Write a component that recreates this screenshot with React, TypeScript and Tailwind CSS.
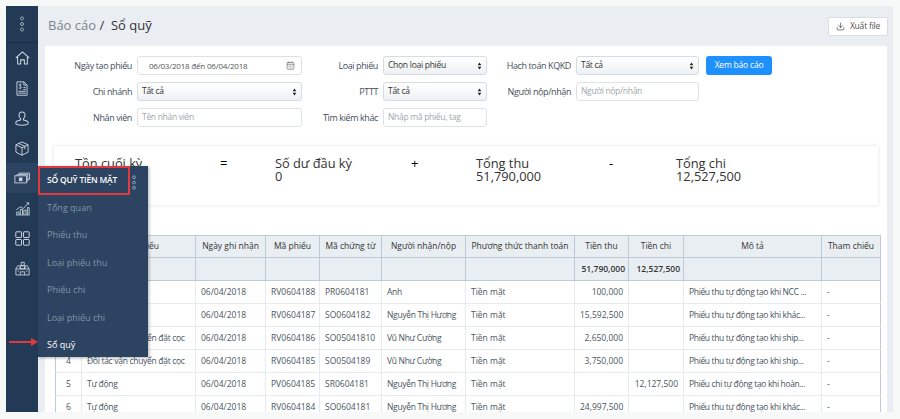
import React from "react";
import { CalendarDays, Download } from "lucide-react";

const font = { fontFamily: '"Open Sans","Noto Sans",sans-serif' };

function Dots({ cls }: { cls: string }) {
  return (
    <svg viewBox="0 0 6 16" className={cls} fill="none" stroke="currentColor" strokeWidth="0.9">
      <circle cx="3" cy="2.4" r="1.5" />
      <circle cx="3" cy="8" r="1.5" />
      <circle cx="3" cy="13.6" r="1.5" />
    </svg>
  );
}

function Sel({ text }: { text: string }) {
  return (
    <div className="h-[19px] flex items-center justify-between pl-[4px] pr-[4px] rounded-[3px] border border-[#d5dce2] bg-gradient-to-b from-white to-[#eef1f4] text-[#333] text-[8.5px] tracking-[-0.27px]">
      <span>{text}</span>
      <svg viewBox="0 0 6 10" className="w-[5px] h-[8px]" fill="#222">
        <path d="M3 0.5 5.300 4H.7zM3 9.500.7 6h4.600z" />
      </svg>
    </div>
  );
}

function Inp({ text }: { text: string }) {
  return (
    <div className="h-[19px] flex items-center px-[4px] rounded-[3px] border border-[#dde2e7] bg-white text-[#a0a7ae] text-[8.5px] tracking-[-0.3px]">
      {text}
    </div>
  );
}

function Lab({ text }: { text: string }) {
  return <div className="h-[19px] flex items-center justify-end pr-[5px] text-[#44505c] whitespace-nowrap text-[9px] tracking-[-0.4px]">{text}</div>;
}

const rows = [
  ["1", "Tự động", "06/04/2018", "RV0604188", "PR0604181", "Anh", "Tiền mặt", "100,000", "", "Phiếu thu tự động tạo khi NCC ...", "-"],
  ["2", "Tự động", "06/04/2018", "RV0604187", "SO0604182", "Nguyễn Thị Hương", "Tiền mặt", "15,592,500", "", "Phiếu thu tự động tạo khi khác...", "-"],
  ["3", "Đối tác vận chuyển đặt cọc", "06/04/2018", "RV0604186", "SO05041810", "Vũ Như Cường", "Tiền mặt", "2,650,000", "", "Phiếu thu tự động tạo khi ship...", "-"],
  ["4", "Đối tác vận chuyển đặt cọc", "06/04/2018", "RV0604185", "SO0504189", "Vũ Như Cường", "Tiền mặt", "3,750,000", "", "Phiếu thu tự động tạo khi ship...", "-"],
  ["5", "Tự động", "06/04/2018", "PV0604185", "SR0604181", "Nguyễn Thị Hương", "Tiền mặt", "", "12,127,500", "Phiếu chi tự động tạo khi hoàn...", "-"],
  ["6", "Tự động", "06/04/2018", "RV0604184", "SO0604181", "Nguyễn Thị Hương", "Tiền mặt", "24,997,500", "", "Phiếu thu tự động tạo khi khác...", "-"],
];
const heads = ["STT", "Loại phiếu", "Ngày ghi nhận", "Mã phiếu", "Mã chứng từ", "Người nhận/nộp", "Phương thức thanh toán", "Tiền thu", "Tiền chi", "Mô tả", "Tham chiếu"];
const widths = [26, 114, 70, 54, 62, 84, 109, 54, 55, 138, 59];

function Summary({ title, value }: { title: string; value?: string }) {
  return (
    <div className="text-[12.8px] leading-[13px] text-[#333] whitespace-nowrap">
      <div>{title}</div>
      <div>{value}</div>
    </div>
  );
}

function NavIcon({ active, children }: { active?: boolean; children: React.ReactNode }) {
  return <div className={`h-[30px] w-full flex items-center justify-center ${active ? "bg-[#2c4462]" : ""}`}>{children}</div>;
}

const menu = ["Tổng quan", "Phiếu thu", "Loại phiếu thu", "Phiếu chi", "Loại phiếu chi"];

export default function App() {
  return (
    <div className="w-[900px] h-[419px] bg-[#f7f9f9] pt-[6px] pl-[6px] pr-[7px] pb-[7px] overflow-hidden" style={font}>
      <div className="relative flex w-full h-[406px] bg-[#eaeef3] overflow-hidden">
        {/* sidebar */}
        <div className="w-[32px] shrink-0 bg-[#233a57] text-[#ccd5de] flex flex-col">
          <div className="h-[37px] border-b border-[#1b2e46] flex items-center justify-center text-[#aab6c2]">
            <Dots cls="w-[6px] h-[16px]" />
          </div>
          <div className="flex flex-col items-center">
            <NavIcon>
              <svg viewBox="0 0 16 15" className="w-[15px] h-[14px]" fill="none" stroke="currentColor" strokeWidth="1.1" strokeLinejoin="round">
                <path d="M.8 7.500 8 1l7.200 6.500M2.800 6.500V14H6V9.500h4V14h3.200V6.500" />
              </svg>
            </NavIcon>
            <NavIcon>
              <svg viewBox="0 0 13 16" className="w-[12px] h-[15px]" fill="none" stroke="currentColor" strokeWidth="1">
                <path d="M1 .8h7.500l3.500 3.500v11H1zM8.500.8v3.500H12" />
                <path d="M2.500 11h8M2.500 13h8M8 7h2.500M8 9h2.500" />
                <path d="M6 3.500c-1.500-.8-3 .2-2 1.500 1 .8 2.400 1 2 2.200-.5 1-2 .8-2.800.2M4.600 2.500v6.200" strokeWidth=".8" />
              </svg>
            </NavIcon>
            <NavIcon>
              <svg viewBox="0 0 15 16" className="w-[14px] h-[15px]" fill="none" stroke="currentColor" strokeWidth="1.1">
                <path d="M7.500 1c-2 0-3.200 1.600-3.200 3.500 0 1.500.8 3 1.700 3.800v1.200C3 10 .8 11 .8 12.800c0 1.400 1.600 2.400 6.700 2.400s6.700-1 6.700-2.400c0-1.800-2.200-2.800-5.200-3.300V8.300c.9-.8 1.700-2.300 1.700-3.800C10.700 2.600 9.500 1 7.500 1z" />
              </svg>
            </NavIcon>
            <NavIcon>
              <svg viewBox="0 0 15 16" className="w-[14px] h-[15px]" fill="none" stroke="currentColor" strokeWidth="1" strokeLinejoin="round">
                <path d="M7.500 1 14 4v8l-6.500 3.200L1 12V4zM1 4l6.500 3.200L14 4M7.500 7.200v8M4 2.500l6.500 3.200v3" />
              </svg>
            </NavIcon>
            <NavIcon active>
              <svg viewBox="0 0 18 13" className="w-[16px] h-[12px]" fill="none" stroke="currentColor" strokeWidth="1">
                <rect x="1" y="4" width="13" height="8" />
                <rect x="5.500" y="6" width="4" height="4" fill="currentColor" stroke="none" />
                <path d="M3.500 4V2.500H15.500V10H14M6 2.500V1H17.500V8H15.500" />
              </svg>
            </NavIcon>
            <NavIcon>
              <svg viewBox="0 0 17 16" className="w-[15px] h-[15px]" fill="none" stroke="currentColor" strokeWidth="1">
                <path d="M1 15.300h15.500M2 15v-3h2.500v3M6 15V9h2.500v6M10 15v-5h2.500v5M14 15V7h2v8" />
                <path d="M1.500 9.500 6 6l3.500 2 5.500-6" />
                <path d="M13 1.500h2.500V4" />
              </svg>
            </NavIcon>
            <NavIcon>
              <svg viewBox="0 0 15 15" className="w-[15px] h-[15px]" fill="none" stroke="currentColor" strokeWidth="1">
                <rect x=".8" y=".8" width="5.700" height="5.700" rx=".6" />
                <rect x="8.500" y=".8" width="5.700" height="5.700" rx=".6" />
                <rect x=".8" y="8.500" width="5.700" height="5.700" rx=".6" />
                <rect x="8.500" y="8.500" width="5.700" height="5.700" rx=".6" />
              </svg>
            </NavIcon>
            <NavIcon>
              <svg viewBox="0 0 17 16" className="w-[15px] h-[15px]" fill="none" stroke="currentColor" strokeWidth="1">
                <path d="M1 15.300h15V8.500H1zM1 8.500 3 5h3v3.500M6 5V8.500M11 8.500V5h3l2 3.500M6 15.300v-3.500h5v3.500M3 11h1.500M12.500 11H14" />
                <path d="M7 1h3.500v3.500H7zM6 8.500h5V5H6" />
              </svg>
            </NavIcon>
          </div>
        </div>

        {/* content */}
        <div className="flex-1 min-w-0 flex flex-col pl-[7px] pr-[6px]">
          <div className="h-[40px] shrink-0 flex items-center justify-between">
            <div className="text-[13px] pl-[3px] text-[#333]">
              <span className="text-[#7b858e]">Báo cáo</span> /&nbsp; Sổ quỹ
            </div>
            <div className="w-[60px] h-[19px] -mr-px flex items-center justify-center gap-[5px] rounded-[2px] border border-[#d8dde2] bg-white text-[#555] text-[8.5px] tracking-[-0.2px]">
              <Download size={9} strokeWidth={2} />
              Xuất file
            </div>
          </div>

          <div className="flex-1 bg-white pt-[10px] pl-[9px] pr-[7px]">
            <div className="-ml-[9px] grid grid-cols-[92px_165px_81px_104px_89px_123px_73px] gap-y-[7px]">
              <Lab text="Ngày tạo phiếu" />
              <div className="h-[19px] flex items-center justify-between pl-[11px] pr-[6px] rounded-[3px] border border-[#dde2e7] text-[#555] text-[8px] tracking-[-0.2px]">
                <span>06/03/2018 đến 06/04/2018</span>
                <CalendarDays size={9} strokeWidth={1.5} />
              </div>
              <Lab text="Loại phiếu" />
              <Sel text="Chọn loại phiếu" />
              <Lab text="Hạch toán KQKD" />
              <Sel text="Tất cả" />
              <div className="ml-[7px] w-[66px] h-[19px] flex items-center justify-center rounded-[3px] bg-[#1e90ff] text-white text-[8.5px] tracking-[-0.2px]">Xem báo cáo</div>

              <Lab text="Chi nhánh" />
              <Sel text="Tất cả" />
              <Lab text="PTTT" />
              <Sel text="Tất cả" />
              <Lab text="Người nộp/nhận" />
              <Inp text="Người nộp/nhận" />
              <div />

              <Lab text="Nhân viên" />
              <Inp text="Tên nhân viên" />
              <Lab text="Tìm kiếm khác" />
              <Inp text="Nhập mã phiếu, tag" />
            </div>

            <div className="mt-[19px] h-[59px] w-[824px] bg-white shadow-[0_0_4px_rgba(0,0,0,0.12)] grid grid-cols-[145px_55px_136px_65px_133px_67px_1fr] pl-[21px] pt-[11px]">
              <Summary title="Tồn cuối kỳ" />
              <div className="text-[13px] leading-[13px]">=</div>
              <Summary title="Số dư đầu kỳ" value="0" />
              <div className="text-[13px] leading-[13px]">+</div>
              <Summary title="Tổng thu" value="51,790,000" />
              <div className="text-[13px] leading-[13px]">-</div>
              <Summary title="Tổng chi" value="12,527,500" />
            </div>

            <table className="mt-[30px] table-fixed border-collapse text-[8.500px] text-[#4a5560] w-[825px] ml-px">
              <colgroup>
                {widths.map((w, i) => <col key={i} style={{ width: w }} />)}
              </colgroup>
              <thead>
                <tr className="h-[22px] bg-[#e9eef2] text-[#333]">
                  {heads.map((h, i) => <th key={i} className="border border-[#bccad5] font-normal px-[2px] whitespace-nowrap">{h}</th>)}
                </tr>
                <tr className="h-[23px] bg-[#e9eef2] text-[#333]">
                  {heads.map((_, i) => (
                    <td key={i} className="border border-[#bccad5] text-right px-[3px] font-semibold">
                      {i === 7 ? "51,790,000" : i === 8 ? "12,527,500" : ""}
                    </td>
                  ))}
                </tr>
              </thead>
              <tbody>
                {rows.map((r, j) => (
                  <tr key={j} className="h-[23px]">
                    {r.map((c, i) => (
                      <td
                        key={i}
                        className={`border border-[#e6eaee] px-[5px] whitespace-nowrap overflow-hidden ${i === 0 ? "text-center border-l-[#bccad5]" : i === 7 || i === 8 ? "text-right" : "text-left"} ${i === 10 ? "border-r-[#bccad5]" : ""} ${i === 9 ? "tracking-[-0.35px]" : i === 1 || i === 5 ? "tracking-[-0.3px]" : ""}`}
                      >
                        {c}
                      </td>
                    ))}
                  </tr>
                ))}
              </tbody>
            </table>
          </div>
        </div>

        {/* flyout menu */}
        <div className="absolute left-[32px] top-[160px] w-[110px] h-[191px] bg-[#2c4462] shadow-[1px_1px_3px_rgba(0,0,0,0.3)]">
          <div className="relative h-[29px] w-[92px] border-2 border-[#e0393e] flex items-center pl-[7px] text-white font-semibold text-[8.500px] tracking-[-0.2px] whitespace-nowrap">
            SỔ QUỸ TIỀN MẶT
          </div>
          <div className="absolute left-[93px] top-[9px] text-[#9fb0c0]"><Dots cls="w-[6px] h-[15px]" /></div>
          <div className="pl-[9px] -mt-px">
            {menu.map((m) => (
              <div key={m} className="h-[27.400px] flex items-center text-[#8094a8] text-[9px]">{m}</div>
            ))}
            <div className="h-[27.400px] flex items-center text-white text-[9px]">Sổ quỹ</div>
          </div>
        </div>

        {/* red arrow */}
        <svg viewBox="0 0 29 8" className="absolute left-[3px] top-[332px] w-[29px] h-[8px]" fill="#e0393e">
          <path d="M0 3h22V0l7 4-7 4V5H0z" />
        </svg>
      </div>
    </div>
  );
}
